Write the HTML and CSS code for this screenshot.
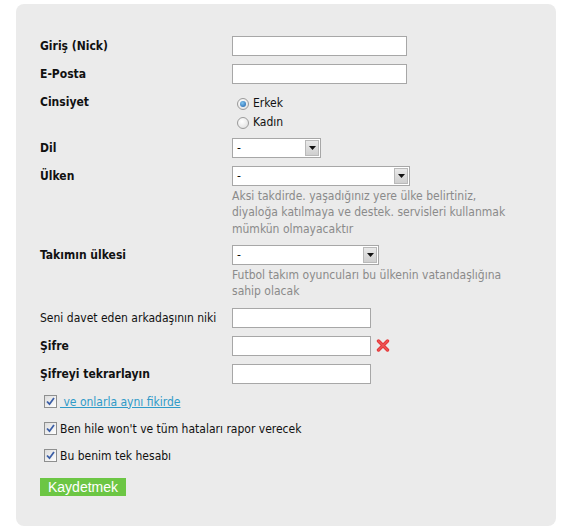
FILE: index.html
```html
<!DOCTYPE html>
<html lang="tr">
<head>
<meta charset="utf-8">
<title>Kayıt</title>
<link rel="stylesheet" href="styles.css">
</head>
<body>
<div class="panel">
  <div class="row">
    <div class="label">Giriş (Nick)</div>
    <div class="field"><div class="input w175"></div></div>
  </div>
  <div class="row">
    <div class="label">E-Posta</div>
    <div class="field"><div class="input w175"></div></div>
  </div>
  <div class="row row-radios">
    <div class="label">Cinsiyet</div>
    <div class="field radios">
      <div class="radio-opt"><span class="radio checked"></span>Erkek</div>
      <div class="radio-opt"><span class="radio"></span>Kadın</div>
    </div>
  </div>
  <div class="row">
    <div class="label">Dil</div>
    <div class="field">
      <div class="select w89"><span class="value">-</span><span class="arrow"><svg width="7" height="4" viewBox="0 0 7 4"><path d="M0 0H7L3.5 4Z" fill="#111"/></svg></span></div>
    </div>
  </div>
  <div class="row">
    <div class="label">Ülken</div>
    <div class="field">
      <div class="select w178"><span class="value">-</span><span class="arrow"><svg width="7" height="4" viewBox="0 0 7 4"><path d="M0 0H7L3.5 4Z" fill="#111"/></svg></span></div>
      <div class="help">Aksi takdirde. yaşadığınız yere ülke belirtiniz,<br>diyaloğa katılmaya ve destek. servisleri kullanmak<br>mümkün olmayacaktır</div>
    </div>
  </div>
  <div class="row">
    <div class="label">Takımın ülkesi</div>
    <div class="field">
      <div class="select w147"><span class="value">-</span><span class="arrow"><svg width="7" height="4" viewBox="0 0 7 4"><path d="M0 0H7L3.5 4Z" fill="#111"/></svg></span></div>
      <div class="help">Futbol takım oyuncuları bu ülkenin vatandaşlığına<br>sahip olacak</div>
    </div>
  </div>
  <div class="row">
    <div class="label plain">Seni davet eden arkadaşının niki</div>
    <div class="field"><div class="input w139"></div></div>
  </div>
  <div class="row">
    <div class="label">Şifre</div>
    <div class="field inline">
      <div class="input w139"></div>
      <svg class="xicon" width="14" height="13" viewBox="0 0 14 13"><path d="M2.5 2L11.5 11M11.5 2L2.5 11" stroke="#e5393a" stroke-width="3.4" stroke-linecap="round"/><path d="M2.5 2L11.5 11M11.5 2L2.5 11" stroke="#f56a6a" stroke-width="1.2" stroke-linecap="round" opacity="0.6"/></svg>
    </div>
  </div>
  <div class="row">
    <div class="label">Şifreyi tekrarlayın</div>
    <div class="field"><div class="input w139"></div></div>
  </div>
  <div class="checks">
    <div class="check-row"><span class="checkbox"><svg width="9" height="9" viewBox="0 0 9 9"><path d="M1 4.5L3.5 7.2L8 1" fill="none" stroke="#3b5ea6" stroke-width="1.8"/></svg></span><a class="link" href="#">&nbsp;ve onlarla aynı fikirde</a></div>
    <div class="check-row"><span class="checkbox"><svg width="9" height="9" viewBox="0 0 9 9"><path d="M1 4.5L3.5 7.2L8 1" fill="none" stroke="#3b5ea6" stroke-width="1.8"/></svg></span>Ben hile won't ve tüm hataları rapor verecek</div>
    <div class="check-row"><span class="checkbox"><svg width="9" height="9" viewBox="0 0 9 9"><path d="M1 4.5L3.5 7.2L8 1" fill="none" stroke="#3b5ea6" stroke-width="1.8"/></svg></span>Bu benim tek hesabı</div>
  </div>
  <div class="actions"><button class="btn" type="button">Kaydetmek</button></div>
</div>
</body>
</html>
```
FILE: styles.css
```css
html, body {
  margin: 0;
  padding: 0;
  background: #ffffff;
}
body {
  font-family: "DejaVu Sans Condensed", "DejaVu Sans", sans-serif;
  font-stretch: condensed;
  font-size: 12px;
  color: #111;
}
.panel {
  margin: 4px 0 0 16px;
  width: 540px;
  height: 522px;
  box-sizing: border-box;
  padding: 32px 24px 0;
  background: #ebebeb;
  border-radius: 8px;
}
.row {
  display: grid;
  grid-template-columns: 192px auto;
  margin-bottom: 8px;
}
.row.row-radios {
  margin-bottom: 6px;
}
.label {
  font-weight: bold;
  line-height: 20px;
  white-space: nowrap;
}
.label.plain {
  font-weight: normal;
}
.field {
  display: flex;
  flex-direction: column;
  align-items: flex-start;
}
.field.inline {
  flex-direction: row;
  align-items: center;
}
.input {
  height: 20px;
  box-sizing: border-box;
  border: 1px solid #a7a7a7;
  background: #fff;
}
.w175 { width: 175px; }
.w139 { width: 139px; }
.w89 { width: 89px; }
.w178 { width: 178px; }
.w147 { width: 147px; }
.xicon {
  margin-left: 5px;
}
.radios {
  padding-top: 2px;
}
.radio-opt {
  display: flex;
  align-items: center;
  height: 19px;
  line-height: 19px;
  padding-left: 5px;
}
.radio {
  width: 10px;
  height: 10px;
  border-radius: 50%;
  border: 1px solid #9a9a9a;
  background: radial-gradient(circle at 40% 35%, #ffffff, #dcdcdc);
  margin-right: 4px;
  position: relative;
  box-sizing: content-box;
}
.radio.checked::after {
  content: "";
  position: absolute;
  left: 2px;
  top: 2px;
  width: 6px;
  height: 6px;
  border-radius: 50%;
  background: radial-gradient(circle at 40% 35%, #7fc4f0, #1a5ea8);
}
.select {
  display: flex;
  height: 20px;
  box-sizing: border-box;
  border: 1px solid #a7a7a7;
  background: #fff;
}
.select .value {
  flex: 1;
  padding-left: 4px;
  line-height: 18px;
}
.select .arrow {
  width: 14px;
  margin: 1px;
  box-sizing: border-box;
  border: 1px solid #b9b9b9;
  background: linear-gradient(#e9e9e9, #cfcfcf);
  display: flex;
  align-items: center;
  justify-content: center;
}
.help {
  margin-top: 1.5px;
  color: #8a8a8a;
  line-height: 16.5px;
  white-space: nowrap;
}
.check-row {
  display: flex;
  align-items: center;
  height: 20px;
  line-height: 20px;
  margin-bottom: 7px;
  padding-left: 4px;
}
.checkbox {
  width: 11px;
  height: 11px;
  border: 1px solid #8e8f8f;
  background: linear-gradient(135deg, #dcdcdc, #ffffff);
  display: flex;
  align-items: center;
  justify-content: center;
  margin-right: 3px;
  flex: none;
}
.link {
  color: #2f9ac8;
  text-decoration: underline;
}
.actions {
  padding-top: 5px;
}
.btn {
  font-family: "Liberation Sans", Arial, sans-serif;
  font-size: 14px;
  color: #fff;
  background: #6cc644;
  border: 0;
  height: 18px;
  line-height: 18px;
  padding: 0 8px;
  margin: 0;
  width: 86px;
  text-align: center;
}
```
